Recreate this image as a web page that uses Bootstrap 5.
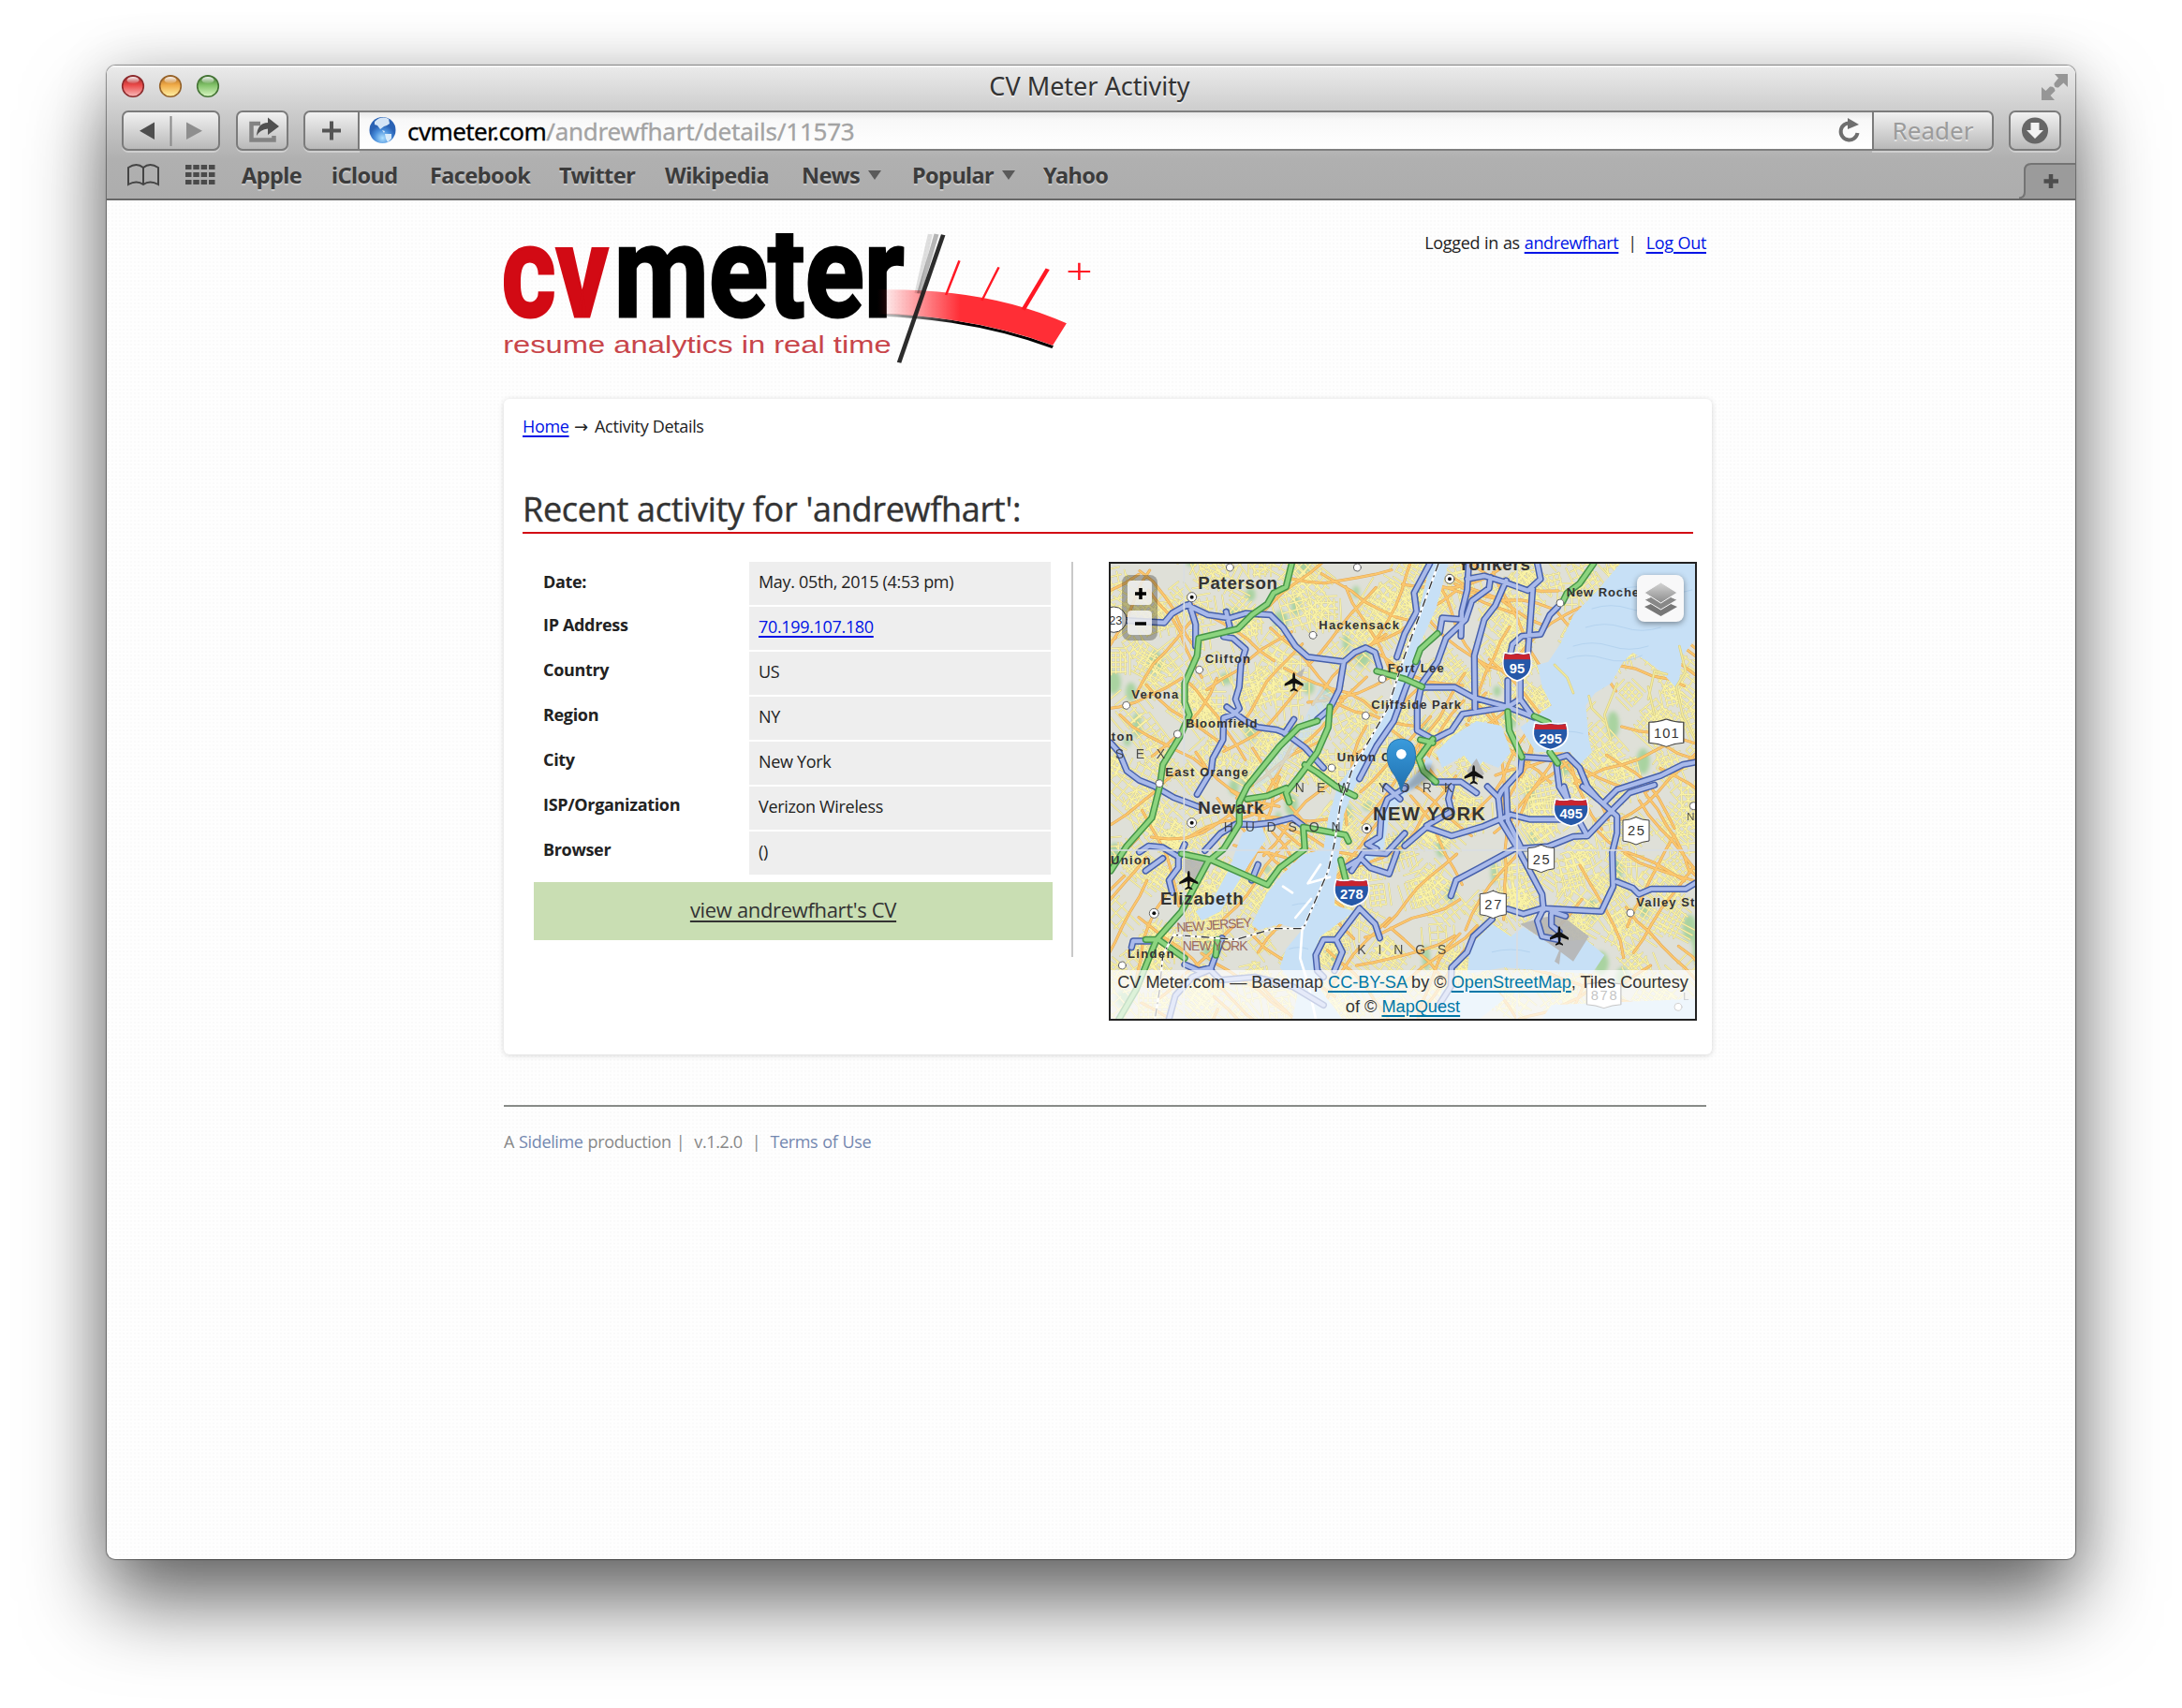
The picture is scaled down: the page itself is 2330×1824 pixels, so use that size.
<!DOCTYPE html>
<html lang="en">
<head>
<meta charset="utf-8">
<title>CV Meter Activity</title>
<link href="https://cdn.jsdelivr.net/npm/bootstrap@5.3.0/dist/css/bootstrap.min.css" rel="stylesheet">
<style>
body{background:#fff;height:1824px;padding:70px 0 0 114px;overflow:hidden;font-family:"Open Sans","Noto Sans",sans-serif;font-size:18px;line-height:26px;color:#222;letter-spacing:-.33px}
.browser{width:2102px;height:1595px;border-radius:9px;overflow:hidden;
 background:#fefefe radial-gradient(circle,#fafafa 1.2px,transparent 1.4px) 0 0/4px 4px;
 box-shadow:0 0 1px 1px rgba(0,0,0,.4),0 46px 86px rgba(0,0,0,.58),0 0 60px rgba(0,0,0,.14)}
.chrome{height:144px;background:linear-gradient(#ebebeb,#cfcfcf 45px,#b0b0b0 100px,#adadad);border-bottom:2px solid #686868;box-shadow:inset 0 2px 0 #f6f6f6;font-family:"Noto Sans",sans-serif;color:#333}
.titlebar{height:48px}
.titletext{font-size:27px;line-height:43px;letter-spacing:0;padding-right:3px;text-shadow:0 2px 0 rgba(255,255,255,.5)}
.tools{height:44px}
.tbtn{height:43px;border:2px solid #7b7b7b;border-radius:7px;background:linear-gradient(#f1f1f1,#b9b9b9);box-shadow:0 2px 0 rgba(255,255,255,.35)}
.reader{width:130px;font-size:26px;line-height:39px;color:#9b9b9b;letter-spacing:0;text-shadow:0 2px 0 rgba(255,255,255,.5)}
.urlfield{height:43px;width:1615px;border:solid #7f7f7f;border-width:2px 0;background:linear-gradient(#e9e9e9,#f8f8f8 8px,#fff);font-size:26px;line-height:41px;color:#000;letter-spacing:-.6px;-webkit-text-stroke:.3px}
.urlpath{color:#a3a3a3;letter-spacing:-.22px}
.marks{height:50px;font-size:23.5px;font-weight:700;line-height:51px;color:#3c3c3c;letter-spacing:-.58px;text-shadow:0 2px 0 rgba(255,255,255,.35)}
.tri{width:14px;height:12px;margin-left:9px;vertical-align:3px}
.header-area{height:212px;padding-right:6px}
.login{margin-top:32px;letter-spacing:-.34px;word-spacing:.6px}
.site{width:1290px;margin-left:424px}
a{color:#0014e6;text-underline-offset:3px;text-decoration-thickness:2px}
.panel{height:700px;border-radius:6px;background:#fff;box-shadow:0 1px 6px rgba(0,0,0,.16);padding:16px 16px 0 20px}
.arrow{font-family:"DejaVu Sans";font-size:18px;line-height:1;margin:0 3px 0 1px}
.ttl{font-size:36px;line-height:44px;font-weight:400;color:#333;border-bottom:2px solid #d20a14;margin:54px 4px 30px 0;padding-bottom:2px;letter-spacing:-.3px;-webkit-text-stroke:.4px}
.info{width:554px;margin-left:12px}
.info dt{width:230px;padding:6px 0 0 10px;height:46px}
.info dd{width:322px;height:46px;margin:0 0 2px;background:#eee;padding:8px 10px 0}
.cvlink{height:62px;background:#c9deb3;margin-top:6px;font-size:22px;line-height:58px}
.cvlink a{color:#333}
.rule{width:2px;height:422px;background:#c9c9c9;margin:0 38px 0 20px}
.mapbox{width:628px;height:490px;border:2px solid #222}
.mapbox text{font-family:"Liberation Sans",Arial,sans-serif;fill:#333;letter-spacing:0}
.attrib{height:52px;background:rgba(255,255,255,.7);font:18.15px/26px "Liberation Sans",Arial,sans-serif;color:#333;letter-spacing:0}
.attrib a{color:#0078a8}
.zoomer{left:12px;top:12px;width:38px;height:70px;border-radius:8px;background:rgba(0,0,0,.27);padding:6px}
.zoomer span{height:26px;border-radius:4px;background:rgba(250,250,250,.82)}
.layers{right:12px;top:12px;width:50px;height:50px;border-radius:8px;background:#f8f8f9;box-shadow:0 2px 6px rgba(0,0,0,.4)}
.foot{border-top:2px solid #888b88;width:1284px;margin-top:54px;padding-top:24px;color:#888;letter-spacing:-.36px;word-spacing:.7px}
.foot a{color:#7488b0;text-decoration:none}
</style>
</head>
<body>
<div class="browser">
 <div class="chrome">
  <div class="titlebar position-relative">
   <svg class="position-absolute top-0 start-0" width="140" height="46">
    <defs>
     <linearGradient id="lr" x2="0" y2="1"><stop stop-color="#8d2326"/><stop offset=".45" stop-color="#ea4a49"/><stop offset="1" stop-color="#f9bcbc"/></linearGradient>
     <linearGradient id="ly" x2="0" y2="1"><stop stop-color="#a66422"/><stop offset=".45" stop-color="#f0ab48"/><stop offset="1" stop-color="#fff3a8"/></linearGradient>
     <linearGradient id="lg" x2="0" y2="1"><stop stop-color="#3d702f"/><stop offset=".45" stop-color="#82c269"/><stop offset="1" stop-color="#dcf8c6"/></linearGradient>
     <linearGradient id="gloss" x2="0" y2="1"><stop stop-color="#fff" stop-opacity=".95"/><stop offset="1" stop-color="#fff" stop-opacity=".1"/></linearGradient>
    </defs>
    <g stroke-width="1.6"><circle cx="28" cy="22" r="11.3" fill="url(#lr)" stroke="#8b2b2d"/><circle cx="68" cy="22" r="11.3" fill="url(#ly)" stroke="#94622a"/><circle cx="108" cy="22" r="11.3" fill="url(#lg)" stroke="#457436"/></g>
    <g fill="url(#gloss)"><ellipse cx="28" cy="15.5" rx="6.5" ry="3.6"/><ellipse cx="68" cy="15.5" rx="6.5" ry="3.6"/><ellipse cx="108" cy="15.5" rx="6.5" ry="3.6"/></g>
   </svg>
   <div class="titletext text-center">CV Meter Activity</div>
   <svg class="position-absolute" style="right:7px;top:8px" width="30" height="30" fill="#969696"><path d="M15 1H29V15L24.500 10.500L19 15.500Q14 16 14.500 11L19 5.500Z"/><path d="M1 15L5.500 19L10 14.500Q15 14 15.500 19L10.500 24L15 29H1Z"/></svg>
  </div>
  <div class="tools d-flex">
   <div class="tbtn" style="width:105px;margin-left:16px"><svg class="d-block" width="101" height="39"><path d="M33 10.500V29L17 19.700Z" fill="#4e4e4e"/><path d="M50.500 4V36" stroke="#8a8a8a" stroke-width="2"/><path d="M67 10.500V29L84 19.700Z" fill="#8e8e8e"/></svg></div>
   <div class="tbtn" style="width:56px;margin-left:17px"><svg class="d-block" width="52" height="39"><path d="M24 12H14.500V29.500H38.500V25" fill="none" stroke="#838383" stroke-width="4.500"/><path d="M20 25Q21 11 32 11V5.500L44 15L32 24V17.500Q24 18 20 25Z" fill="#505050"/></svg></div>
   <div class="tbtn rounded-end-0" style="width:60px;margin-left:16px"><svg class="d-block" width="56" height="39"><path d="M28 9.500V29.500M18 19.500H38" stroke="#555" stroke-width="4"/></svg></div>
   <div class="urlfield d-flex align-items-start">
    <svg width="51" height="39"><defs><radialGradient id="gl" cy=".8"><stop stop-color="#aee0ff"/><stop offset=".6" stop-color="#4a8fdc"/><stop offset="1" stop-color="#2a62b4"/></radialGradient></defs><circle cx="24.500" cy="19" r="14" fill="url(#gl)"/><path d="M16 10Q23 3 31 7L32 12L29 14L26 15L22 18L19 14L16 13ZM24 19L27 20L26 22ZM27 23L34 23L34 28L30 32L28 28Z" fill="#e6f3fd" opacity=".9"/></svg>
    <div class="flex-fill">cvmeter.com<span class="urlpath">/andrewfhart/details/11573</span></div>
    <svg width="40" height="39"><path d="M24.500 22A9 9 0 1 1 17 11.500" fill="none" stroke="#6f6f6f" stroke-width="4"/><path d="M14 6L26 13L14 18Z" fill="#6f6f6f"/></svg>
   </div>
   <div class="tbtn rounded-start-0 text-center reader">Reader</div>
   <div class="tbtn" style="width:56px;margin-left:16px"><svg class="d-block" width="52" height="39"><circle cx="26" cy="19.500" r="14" fill="#666"/><path d="M21.500 11H30.500V19H35L26 28L17 19H21.500Z" fill="#f2f2f2"/></svg></div>
  </div>
  <div class="marks d-flex position-relative">
   <svg style="margin-left:21px" width="36" height="50" fill="none" stroke="#444" stroke-width="2"><path d="M2 35V17Q11 11 18 17Q25 11 34 17V35Q25 30 18 35Q11 30 2 35ZM18 17V35"/></svg>
   <svg style="margin-left:27px;margin-right:15px" width="32" height="50" fill="#4a4a4a"><path d="M0 14h6.500v5h-6.500zM8.300 14h6.500v5h-6.500zM16.600 14h6.500v5h-6.500zM25 14h6.500v5h-6.500zM0 22h6.500v5h-6.500zM8.300 22h6.500v5h-6.500zM16.600 22h6.500v5h-6.500zM25 22h6.500v5h-6.500zM0 30h6.500v5h-6.500zM8.300 30h6.500v5h-6.500zM16.600 30h6.500v5h-6.500zM25 30h6.500v5h-6.500z"/></svg>
   <div style="width:96px;margin-left:13px">Apple</div><div style="width:105px">iCloud</div><div style="width:138px">Facebook</div><div style="width:113px">Twitter</div><div style="width:146px">Wikipedia</div>
   <div style="width:118px">News<svg class="tri"><path d="M0 1H14L7 11Z" fill="#5a5a5a"/></svg></div>
   <div style="width:140px">Popular<svg class="tri"><path d="M0 1H14L7 11Z" fill="#5a5a5a"/></svg></div><div>Yahoo</div>
   <svg class="position-absolute end-0 bottom-0" width="60" height="38"><path d="M0 38Q6 37 6 31V8Q6 1 13 1H60V38Z" fill="#9b9b9b"/><path d="M0 37.500Q6 37 6 31V8Q6 1 13 1H60" fill="none" stroke="#747474" stroke-width="2"/><path d="M34 12V27M26.500 19.500H42" stroke="#4d4d4d" stroke-width="4.500"/></svg>
  </div>
 </div>
 <div class="site">
  <div class="header-area d-flex justify-content-between">
   <svg width="627" height="140" viewBox="42 57 1490 420" preserveAspectRatio="none" style="margin-top:35px">
    <defs><linearGradient id="fade" gradientUnits="userSpaceOnUse" x1="990" x2="1200" y1="0" y2="0"><stop stop-color="#ff2e36" stop-opacity="0"/><stop offset="1" stop-color="#ff2e36"/></linearGradient>
    <linearGradient id="fadek" gradientUnits="userSpaceOnUse" x1="980" x2="1200" y1="0" y2="0"><stop stop-opacity=".1"/><stop offset="1"/></linearGradient></defs>
    <g font-family="Roboto" font-weight="700" font-size="414" stroke-width="9" letter-spacing="0"><text x="36" y="323" fill="#d20a14" stroke="#d20a14" textLength="272" lengthAdjust="spacingAndGlyphs">cv</text><text x="322" y="323" fill="#000" stroke="#000" textLength="736" lengthAdjust="spacingAndGlyphs">meter</text></g>
    <path d="M990 318Q1240 330 1435 422" fill="none" stroke="url(#fadek)" stroke-width="9"/>
    <path d="M990 238Q1270 232 1470 346L1435 416Q1230 322 990 316Z" fill="url(#fade)"/>
    <path d="M1164 255L1198 145M1255 273L1298 166" stroke="#ff1824" stroke-width="6"/><path d="M1360 302L1422 172" stroke="#ff1824" stroke-width="11"/><path d="M1474 180H1530M1502 152V207" stroke="#ff1824" stroke-width="6"/>
    <path d="M1124 60L1090 250" stroke="#000" stroke-opacity=".12" stroke-width="12"/><path d="M1140 60L1096 250" stroke="#000" stroke-opacity=".28" stroke-width="12"/><path d="M1157 62L1045 472" stroke="#1c1c1c" stroke-opacity=".93" stroke-width="11"/>
    <text x="40" y="441" font-family="Liberation Sans" font-size="80" letter-spacing="0" fill="#c8454a" textLength="985" lengthAdjust="spacingAndGlyphs">resume analytics in real time</text>
   </svg>
   <div class="login">Logged in as <a href="#">andrewfhart</a> &nbsp;|&nbsp; <a href="#">Log Out</a></div>
  </div>
  <div class="panel">
   <div><a href="#">Home</a> <span class="arrow">→</span> Activity Details</div>
   <h1 class="ttl">Recent activity for 'andrewfhart':</h1>
   <div class="d-flex">
    <div class="info">
     <dl class="d-flex flex-wrap m-0">
      <dt style="padding-top:8px">Date:</dt><dd>May. 05th, 2015 (4:53 pm)</dd>
      <dt>IP Address</dt><dd><a href="#">70.199.107.180</a></dd>
      <dt>Country</dt><dd>US</dd><dt>Region</dt><dd>NY</dd><dt>City</dt><dd>New York</dd>
      <dt>ISP/Organization</dt><dd>Verizon Wireless</dd><dt>Browser</dt><dd>()</dd>
     </dl>
     <div class="cvlink text-center"><a href="#">view andrewfhart's CV</a></div>
    </div>
    <div class="rule"></div>
    <div class="mapbox position-relative overflow-hidden flex-shrink-0">
     <svg id="map" class="d-block" width="624" height="486" viewBox="18 36 1872 1458" fill="none" stroke-linejoin="round" stroke-linecap="round">
      <defs>
       <g id="blue"><path d="M18 215L190 225L215 195L262 168L330 200L400 210L450 195L530 200L570 240L610 300L650 335L765 350L800 320L835 305L865 320L880 370M270 165L290 230V300M388 190L400 240L380 270L410 275L450 310L435 360L430 430L418 470L430 500L410 520L380 530L378 600L345 660L340 700L295 775M390 495L450 540L490 560L550 568L580 580L640 625L700 690M605 535L575 580M765 350L750 440L720 500L680 535M1040 36L990 130L998 190L960 260L935 335M1000 350L965 430L925 540L870 620L815 725M18 610L45 640L70 700L110 730L160 750L220 785L300 815M320 955L370 900L420 870L480 872L540 865L600 850L640 880M110 960L140 940L185 945L235 975V1010L205 1050L215 1090M185 980L130 1020M235 980L255 935M490 1000L470 1050M85 1265L90 1245L150 1245M255 1320L300 1340L340 1330L375 1235M340 1335L280 1360L225 1420L205 1494M340 1340L370 1370L480 1360L600 1390L700 1450M815 1140L740 1240H700L675 1290L680 1340L700 1360M740 1240L760 1280L735 1340M815 1140L865 1190L880 1235M900 750L945 790M960 755L905 790L885 840L880 910L840 935L870 950M790 1020L830 960L900 965L960 900M770 1010L820 980L850 1010L910 1030L935 960"/>
       <path d="M1165 40L1160 120L1143 190L1140 268M1072 255L1080 210L1145 215M1235 80L1230 115L1175 155L1155 215L1092 275L1065 350L1015 420L1000 490V570L1050 598M1285 90L1250 170L1215 215L1183 330L1185 500M1160 85L1215 75L1280 95L1355 122L1395 85L1385 36M1370 115L1360 250L1355 320M1450 175L1425 200L1395 262L1335 268L1305 295L1298 330M1290 410V495M1330 410V470L1370 525M1330 470L1290 495M1020 432L1120 432L1180 465L1290 495L1375 528M1290 495L1145 518L1110 570L1055 598M1345 655L1440 662L1480 650L1520 690L1545 750L1580 790M1445 670L1455 750L1480 790M1335 660L1330 700L1270 765L1260 785M1055 735L1140 735L1190 770M1890 672L1850 680L1780 715L1640 760L1600 800"/>
       <path d="M960 940L1030 880L1110 908L1210 878L1300 840L1360 855H1470M1225 750L1260 785L1268 860L1320 945L1360 1020L1400 1095L1405 1145M1285 750L1290 860L1330 940M1108 1100L1125 1050L1200 1010L1310 950L1420 942L1500 910L1545 908L1610 840L1680 770L1760 745M1530 750L1580 790L1640 845V900L1625 960L1628 1070L1590 1150L1400 1140L1340 1158L1290 1142M1470 750L1485 800L1545 908M1640 1055L1690 1075L1710 1095L1750 1078H1860L1890 1060M1240 1175L1180 1230L1160 1280L1110 1330L1108 1390L1070 1450M1400 1150L1385 1180L1400 1230L1450 1240M1430 1150L1475 1165M1430 1160V1195L1455 1215M1110 750L1100 790L1110 830L1030 875"/></g>
       <path id="green" d="M598 36L580 110L540 130L520 165L470 200L425 245L300 275L295 330L255 420V480L270 520L240 590L185 680L175 750L150 850L70 940L18 1020M870 380L960 405L1015 430M680 540L620 560L560 620L455 750L430 800V870L380 950L330 990L245 1150L165 1240L100 1400L45 1494M720 495L715 560L680 640L620 720L580 770L590 800M455 790L520 780L580 755M640 680L680 705L740 750L800 780M245 965L340 985L520 1065L560 1010L640 950L635 880L770 905L780 925M755 985L770 1045M130 1240H170L255 1300M360 1240L355 1290M1565 36L1520 100L1480 130L1465 160M1065 260L1010 310L995 350M1290 510L1295 570L1335 655M1375 525L1420 545M1050 598L1005 660L1020 700L1060 735M1010 600L1050 610M1425 640L1450 675"/>
       <path id="plane" d="M0-30C4-30 4-20 4-12L30 6V13L4 4L3 20L12 27V31L0 27L-12 31V27L-3 20L-4 4L-30 13V6L-4-12C-4-20-4-30 0-30Z" fill="#111"/>
       <g id="ish"><path d="M-50-42Q-25-36 0-42Q25-36 50-42L55-18Q60 30 0 44Q-60 30-55-18Z" fill="#2558a8" stroke="#fff" stroke-width="5"/><path d="M-48-39Q-25-33 0-39Q25-33 48-39L52-21H-52Z" fill="#c9242f"/></g>
       <path id="ssh" d="M0-44Q20-34 42-34V32Q20 34 0 44Q-20 34-42 32V-34Q-20-34 0-44Z" fill="#fff" stroke="#444" stroke-width="3"/>
       <linearGradient id="pin" x2="0" y2="1"><stop stop-color="#3a9bdc"/><stop offset="1" stop-color="#1f6fae"/></linearGradient>
       <filter id="soft"><feGaussianBlur stdDeviation="7"/></filter>
      </defs>
      <path d="M0 0H1900V1500H0Z" fill="#dfe0d8"/>
      <g id="parks" fill="#a9d3a0" filter="url(#soft)"></g>
      <g id="streets"></g>
      <g fill="#c7e0f6">
       <path d="M1042 36H1100L1060 180L1010 290L965 430L925 560L880 620L800 750L765 840L750 960L740 1050L735 1130L800 1150L690 1230L665 1290L690 1400L760 1494H600L620 1400L560 1330L580 1270L630 1210L560 1190L490 1210L470 1190L520 1090L560 1040L630 970L700 950L715 850L745 750L830 630L900 500L940 400L985 270Z"/>
       <path d="M440 900L500 860L515 920L460 1000L400 1100L370 1150L310 1180L290 1150L340 1120L400 1010L420 950Z"/>
       <path d="M690 430L740 470L700 540L620 620L540 720L480 760L470 710L560 600L640 530Z" opacity=".6"/>
       <path d="M1060 640L1110 590L1190 540L1270 555L1300 640L1260 690L1210 670L1190 700L1150 650L1080 690Z"/>
       <path d="M1650 36H1890V280L1850 330L1835 440L1780 380L1740 350L1690 320L1660 350L1620 420L1570 450L1540 490L1550 600L1560 640L1520 680L1490 640L1380 640L1330 560L1400 510L1430 490L1400 430L1385 360L1420 350L1460 290L1500 200L1570 130Z"/>
       <path d="M1170 1260L1240 1190L1300 1230L1340 1200L1420 1250L1540 1240L1600 1290L1560 1350L1400 1340L1280 1330L1160 1350ZM1080 1400L1230 1380L1280 1430L1200 1494H1050ZM1430 1450L1890 1430V1494H1400Z"/>
       <path d="M900 800L960 740L1020 690L1030 650L1050 670L1030 720L960 780L910 850L890 960L830 1000L780 1010L860 940L885 860Z"/>
      </g>
      <path d="M1500 300q60-20 120 0t120 0M1480 340q60-20 120 0t120-10M1540 240q60-20 120 0t120 0M1560 180q60-20 120 0t120 0M1640 120q60-20 120 0t120 0M600 1130q40-12 80 0M590 1270q30-10 60 0M1440 580q40-14 90 0M1240 1280q60-16 120 0" stroke="#b4d3ef" stroke-width="3"/>
      <path d="M1840 300L1860 380L1830 430L1850 520L1890 600M1800 390L1760 380L1740 470M1740 430L1760 520M1640 420L1600 520L1620 600M1440 360L1480 400L1500 450M1550 460L1560 500L1600 540" stroke="#d8cf85" stroke-width="8"/>
      <path d="M1840 300L1860 380L1830 430L1850 520L1890 600M1800 390L1760 380L1740 470M1740 430L1760 520M1640 420L1600 520L1620 600M1440 360L1480 400L1500 450M1550 460L1560 500L1600 540" stroke="#f4eba0" stroke-width="4"/>
      <path d="M660 1110L610 1170M570 1070L600 1090M650 1060L720 1040M632 1200L625 1300L650 1380L675 1494M690 1000L650 1060" stroke="#fff" stroke-width="8"/>
      <path d="M1330 1190L1400 1170L1460 1160L1550 1230L1500 1310L1460 1280L1455 1320L1440 1310L1455 1275ZM1160 700L1190 660L1215 710L1180 730ZM250 980L320 990L290 1050L250 1020ZM610 390L640 370L630 400Z" fill="#b5b5b5" opacity=".9"/>
      <use href="#blue" stroke="#4660ab" stroke-width="22"/><use href="#blue" stroke="#a9baea" stroke-width="13"/>
      <use href="#green" stroke="#459548" stroke-width="22"/><use href="#green" stroke="#8cd47f" stroke-width="13"/>
      <path d="M1068 36L960 330L905 500L790 700L755 800L735 930L715 1020L635 1205H540L420 1240L220 1225L185 1290L175 1400L160 1494" stroke="#fff" stroke-width="7"/>
      <path d="M1068 36L960 330L905 500L790 700L755 800L735 930L715 1020L635 1205H540L420 1240L220 1225L185 1290L175 1400L160 1494" stroke="#333" stroke-width="4" stroke-dasharray="26 14 6 14" stroke-linecap="butt"/>
      <g stroke="#d9dde2" stroke-width="5"><path d="M253 36V1494M1320 36V1494M18 954H1890"/></g>
      <g fill="#fff" stroke="#666" stroke-width="3"><circle cx="400" cy="48" r="12"/><circle cx="808" cy="48" r="12"/><circle cx="666" cy="265" r="12"/><circle cx="302" cy="376" r="12"/><circle cx="68" cy="490" r="12"/><circle cx="232" cy="582" r="12"/><circle cx="174" cy="740" r="12"/><circle cx="726" cy="690" r="12"/><circle cx="835" cy="523" r="12"/><circle cx="888" cy="405" r="12"/><circle cx="1458" cy="162" r="12"/><circle cx="55" cy="1323" r="12"/><circle cx="1683" cy="1155" r="12"/><circle cx="1885" cy="812" r="12"/><circle cx="1836" cy="1456" r="12"/>
      <circle cx="278" cy="143" r="15"/><circle cx="1104" cy="85" r="15"/><circle cx="278" cy="866" r="15"/><circle cx="157" cy="1156" r="15"/><circle cx="838" cy="884" r="15"/></g>
      <g fill="#111"><circle cx="278" cy="143" r="6"/><circle cx="1104" cy="85" r="6"/><circle cx="278" cy="866" r="6"/><circle cx="157" cy="1156" r="6"/><circle cx="838" cy="884" r="6"/></g>
      <use href="#plane" x="605" y="415"/><use href="#plane" x="1181" y="712"/><use href="#plane" x="268" y="1050"/><use href="#plane" x="1455" y="1228"/>
      <g font-weight="700" font-size="39">
       <g font-size="56"><text x="298" y="118" textLength="254">Paterson</text><text x="1130" y="58" textLength="232">Yonkers</text><text x="298" y="838" textLength="210">Newark</text><text x="177" y="1128" textLength="266">Elizabeth</text><text x="858" y="859" textLength="360" font-size="61">NEW YORK</text></g>
       <text x="685" y="245" textLength="257">Hackensack</text><text x="320" y="353" textLength="145">Clifton</text><text x="85" y="468" textLength="150">Verona</text><text x="258" y="560" textLength="229">Bloomfield</text><text x="193" y="718" textLength="265">East Orange</text><text x="743" y="670" textLength="170">Union C</text><text x="905" y="385" textLength="180">Fort Lee</text><text x="853" y="500" textLength="287">Cliffside Park</text><text x="1478" y="142" textLength="232">New Roche</text><text x="18" y="1000" textLength="127">Union</text><text x="72" y="1300" textLength="148">Linden</text><text x="1702" y="1135" textLength="186">Valley St</text><text x="20" y="603" textLength="70">ton</text>
      </g>
      <g font-size="42" opacity=".85"><text x="380" y="895" textLength="375">HUDSON</text><text x="608" y="768" textLength="506">NEW YORK</text><text x="808" y="1287" textLength="285">KINGS</text><text x="32" y="660" textLength="160">SEX</text><text x="1864" y="858" font-size="34">N</text><text x="1852" y="1434" font-size="34">L</text></g>
      <g font-size="42"><text style="fill:#9a6a5e" x="230" y="1216" textLength="242" transform="rotate(-4 230 1216)">NEW JERSEY</text><text style="fill:#9a6a5e" x="248" y="1275" textLength="210">NEW YORK</text></g>
      <use href="#ish" transform="translate(1320 365) scale(.82 1.05)"/><use href="#ish" x="1427" y="588"/><use href="#ish" x="1493" y="832"/><use href="#ish" x="790" y="1090"/>
      <g font-weight="700" font-size="44" text-anchor="middle"><text x="1320" y="387" style="fill:#fff">95</text><text x="1427" y="611" style="fill:#fff">295</text><text x="1493" y="853" style="fill:#fff">495</text><text x="790" y="1111" style="fill:#fff">278</text></g>
      <use href="#ssh" transform="translate(1798 578) scale(1.32 1)"/><use href="#ssh" x="1701" y="892"/><use href="#ssh" x="1397" y="981"/><use href="#ssh" x="1243" y="1128"/><use href="#ssh" transform="translate(1598 1416) scale(1.3 1)"/><circle cx="28" cy="215" r="41" fill="#fff" stroke="#444" stroke-width="3"/>
      <g font-size="44" text-anchor="middle"><text x="1798" y="594" textLength="80">101</text><text x="1701" y="907" textLength="54">25</text><text x="1397" y="998" textLength="54">25</text><text x="1243" y="1144" textLength="54">27</text><text x="1598" y="1433" textLength="84">878</text><text x="34" y="230" font-size="38">23</text></g>
      <path d="M950 765L1010 690Q1060 660 1050 710Q1030 750 950 765Z" fill="#000" opacity=".25" filter="url(#soft)"/>
      <path d="M949 765Q943 735 918 700Q903 678 903 646Q905 599 949 597Q993 599 995 646Q995 678 980 700Q955 735 949 765Z" fill="url(#pin)" stroke="#2a74ac" stroke-width="3"/><circle cx="949" cy="646" r="16" fill="#fff"/>
     </svg>
     <div class="zoomer position-absolute d-flex flex-column justify-content-between">
      <span><svg class="d-block" width="26" height="26"><path d="M14 8V20M8 14H20" stroke="#000" stroke-width="3.500"/></svg></span>
      <span><svg class="d-block" width="26" height="26"><path d="M8 14H20" stroke="#000" stroke-width="3.500"/></svg></span>
     </div>
     <div class="layers position-absolute"><svg class="d-block" width="50" height="50"><defs><linearGradient id="sheet" x2="0" y2="1"><stop stop-color="#d5d5d5"/><stop offset="1" stop-color="#8b8b8b"/></linearGradient></defs><path d="M8 34L16 30.500L25.500 37L35 30.500L43 34L25.500 44Z" fill="#777"/><path d="M8 26.500L16 23L25.500 29.500L35 23L43 26.500L25.500 37Z" fill="#888" stroke="#f8f8f9"/><path d="M25.500 8L43 19L25.500 30L8 19Z" fill="url(#sheet)" stroke="#f8f8f9"/></svg></div>
     <div class="attrib position-absolute start-0 end-0 bottom-0 text-center text-nowrap">CV Meter.com — Basemap <a href="#">CC-BY-SA</a> by © <a href="#">OpenStreetMap</a>, Tiles Courtesy<br>of © <a href="#">MapQuest</a></div>
    </div>
   </div>
  </div>
  <div class="foot">A <a href="#">Sidelime</a> production |&nbsp; v.1.2.0 &nbsp;|&nbsp; <a href="#">Terms of Use</a></div>
 </div>
</div>
<script src="https://cdn.jsdelivr.net/npm/bootstrap@5.3.0/dist/js/bootstrap.bundle.min.js"></script>
<script>
// Minor streets and parks of the base map, from a fixed seed
let s=11;const r=()=>(s=(s*16807)%2147483647)/2147483647;
let fine='',mid='',park='';
for(let i=0;i<430;i++){
 const cx=r()*1900,cy=r()*1500,a=(r()<.7?.45:1.1)+r()*.5,n=3+r()*4|0,L=45+r()*90,g=15+r()*15;
 const dx=Math.cos(a),dy=Math.sin(a);
 for(let k=0;k<n;k++){const o=(k-n/2)*g;
  fine+=`M${(cx-dy*o-dx*L/2).toFixed()} ${(cy+dx*o-dy*L/2).toFixed()}l${(dx*L).toFixed()} ${(dy*L+r()*8).toFixed()}`;
  fine+=`M${(cx+dx*o+dy*L/2).toFixed()} ${(cy+dy*o-dx*L/2).toFixed()}l${(-dy*L*.7).toFixed()} ${(dx*L*.7).toFixed()}`;}
}
for(let i=0;i<150;i++){let x=r()*1900,y=r()*1500,a=(i%2?.4:2)+r()*.6;mid+=`M${x|0} ${y|0}`;
 for(let k=0;k<6;k++){a+=(r()-.5)*.5;mid+=`l${(Math.cos(a)*55).toFixed()} ${(Math.sin(a)*55).toFixed()}`;}}
for(let i=0;i<60;i++){park+=`<ellipse cx="${r()*1900|0}" cy="${r()*1500|0}" rx="${10+r()*16|0}" ry="${14+r()*30|0}"/>`;}
document.getElementById('parks').innerHTML=park;
document.getElementById('streets').innerHTML=`<path d="${fine}" stroke="#cfc58a" stroke-width="5.500"/><path d="${fine}" stroke="#faf3a6" stroke-width="3.500"/><path d="${mid}" stroke="#e3a450" stroke-width="9"/><path d="${mid}" stroke="#fbc76e" stroke-width="6"/>`;
</script>
</body>
</html>
